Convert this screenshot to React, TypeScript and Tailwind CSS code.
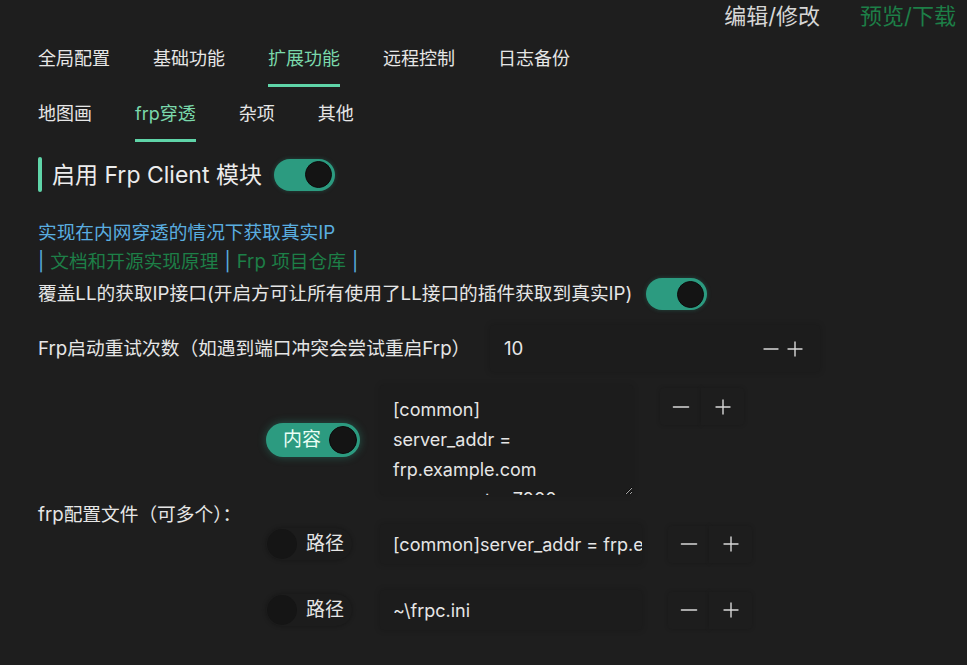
import React from "react";
import { Minus, Plus } from "lucide-react";

const MINT = "bg-[#5fd4a8]";

function Tab({ label, active }: { label: string; active?: boolean }) {
  return (
    <div className="flex flex-col items-stretch">
      <span className={`leading-[24px] text-[18px] ${active ? "text-[#7ad8ab]" : "text-[#e6e6e6]"}`}>{label}</span>
      <div className={`mt-[13px] h-[3px] ${active ? MINT : "bg-transparent"}`} />
    </div>
  );
}

function BigToggle() {
  return (
    <div className="w-[61px] h-[32px] rounded-full bg-[#2c9b80] flex items-center justify-end pr-[3px] shadow-[0_0_4px_rgba(44,155,128,0.35)] shrink-0">
      <div className="w-[27px] h-[27px] rounded-full bg-[#141414] border border-[#0b0b0b]" />
    </div>
  );
}

function StepButtons() {
  return (
    <div className="flex">
      <div className="w-[41px] h-[37px] flex items-center justify-center bg-[#1d1d1d] shadow-[0_0_4px_rgba(0,0,0,0.18)] rounded-l-[4px]">
        <Minus size={26} strokeWidth={1.3} color="#d8d8d8" />
      </div>
      <div className="w-[43px] h-[37px] flex items-center justify-center bg-[#1d1d1d] shadow-[0_0_4px_rgba(0,0,0,0.18)] rounded-r-[4px]">
        <Plus size={24} strokeWidth={1.4} color="#d8d8d8" />
      </div>
    </div>
  );
}

function OffToggle({ label }: { label: string }) {
  return (
    <div className="w-[86px] h-[32px] rounded-full bg-[#1c1c1c] shadow-[0_0_4px_rgba(0,0,0,0.3)] flex items-center pl-[1px] shrink-0">
      <div className="w-[30px] h-[30px] rounded-full bg-[#151515]" />
      <span className="ml-[9px] text-[19px] leading-[24px] text-[#e6e6e6]">{label}</span>
    </div>
  );
}

const INPUT_FONT = "font-['Inter','Noto_Sans_CJK_SC',sans-serif]";

export default function App() {
  return (
    <div className="w-[967px] h-[665px] overflow-hidden bg-[#1e1e1e] text-[#e6e6e6] font-['Inter','Noto_Sans_CJK_SC',sans-serif]">
      {/* header */}
      <div className="h-[32px] flex items-center justify-end pr-[11px] gap-[40px] text-[22px]">
        <span className="text-[#d6d6d6]">编辑/修改</span>
        <span className="text-[#1d7f47]">预览/下载</span>
      </div>

      {/* tabs row 1 */}
      <div className="pl-[38px] pt-[15px] flex gap-[43px]">
        <Tab label="全局配置" />
        <Tab label="基础功能" />
        <Tab label="扩展功能" active />
        <Tab label="远程控制" />
        <Tab label="日志备份" />
      </div>

      {/* tabs row 2 */}
      <div className="pl-[38px] pt-[15px] flex gap-[43px]">
        <Tab label="地图画" />
        <Tab label="frp穿透" active />
        <Tab label="杂项" />
        <Tab label="其他" />
      </div>

      {/* heading */}
      <div className="pl-[38px] mt-[15px] flex items-center h-[35px]">
        <div className={`w-[4px] h-[35px] rounded-[2px] ${MINT}`} />
        <span className="ml-[10px] text-[23px] leading-[30px] text-[#ececec]">启用 Frp Client 模块</span>
        <div className="ml-[12px]">
          <BigToggle />
        </div>
      </div>

      {/* description */}
      <div className="pl-[38px] mt-[26px] text-[18.7px]">
        <div className="leading-[29px] text-[#5aaee0]">实现在内网穿透的情况下获取真实IP</div>
        <div className="leading-[29px] flex items-center">
          <span className="text-[#5aaee0]">|</span>
          <span className="text-[#1d7f47] ml-[6px]">文档和开源实现原理</span>
          <span className="text-[#5aaee0] ml-[6px]">|</span>
          <span className="text-[#1d7f47] ml-[6px]">Frp 项目仓库</span>
          <span className="text-[#5aaee0] ml-[6px]">|</span>
        </div>
        <div className="mt-[2px] h-[32px] flex items-center gap-[14px]">
          <span className="leading-[24px] text-[#e6e6e6]">覆盖LL的获取IP接口(开启方可让所有使用了LL接口的插件获取到真实IP)</span>
          <BigToggle />
        </div>
      </div>

      {/* retry count */}
      <div className="pl-[38px] mt-[15px] flex items-center text-[18.7px]">
        <span className="w-[452px] leading-[24px]">Frp启动重试次数（如遇到端口冲突会尝试重启Frp）</span>
        <div className="w-[330px] h-[47px] flex items-center justify-between pl-[14px] pr-[13px] bg-[#1c1c1c] shadow-[0_0_6px_rgba(0,0,0,0.2)] rounded-[4px]">
          <span className="leading-[24px]">10</span>
          <div className="flex items-center gap-0">
            <Minus size={24} strokeWidth={1.4} color="#d8d8d8" />
            <Plus size={24} strokeWidth={1.4} color="#d8d8d8" />
          </div>
        </div>
      </div>

      {/* config files */}
      <div className="pl-[38px] mt-[13px] flex items-center text-[18.7px]">
        <span className="w-[228px] leading-[24px]">frp配置文件（可多个）：</span>
        <div className="flex flex-col pb-[15px]">
          {/* item 1 */}
          <div className="flex items-start">
            <div className="h-[110px] flex items-center">
              <div className="w-[94px] h-[34px] rounded-full bg-[#2c9b80] flex items-center justify-between pl-[17px] pr-[3px] shadow-[0_0_8px_rgba(44,155,128,0.45)]">
                <span className="text-[19px] leading-[24px] text-[#eafff5]">内容</span>
                <div className="w-[28px] h-[28px] rounded-full bg-[#141414] border border-[#0b0b0b]" />
              </div>
            </div>
            <textarea
              readOnly
              value={"[common]\nserver_addr = frp.example.com\nserver_port = 7000\n"}
              className={`ml-[20px] w-[253px] h-[110px] pt-[10px] pl-[13px] pr-[10px] text-[18px] leading-[30px] bg-[#1c1c1c] text-[#e6e6e6] outline-none overflow-hidden resize-y shadow-[0_0_6px_rgba(0,0,0,0.15)] rounded-[4px] ${INPUT_FONT}`}
            />
            <div className="ml-[27px] mt-[3px]">
              <StepButtons />
            </div>
          </div>

          {/* item 2 */}
          <div className="mt-[29px] h-[40px] flex items-center">
            <OffToggle label="路径" />
            <input
              readOnly
              value="[common]server_addr = frp.example.com"
              className={`ml-[28px] w-[262px] h-[40px] pl-[13px] text-[18px] bg-[#1c1c1c] text-[#e6e6e6] outline-none shadow-[0_0_6px_rgba(0,0,0,0.2)] rounded-[4px] ${INPUT_FONT}`}
            />
            <div className="ml-[26px]">
              <StepButtons />
            </div>
          </div>

          {/* item 3 */}
          <div className="mt-[26px] h-[40px] flex items-center">
            <OffToggle label="路径" />
            <input
              readOnly
              value="~\frpc.ini"
              className={`ml-[28px] w-[262px] h-[40px] pl-[13px] text-[18px] bg-[#1c1c1c] text-[#e6e6e6] outline-none shadow-[0_0_6px_rgba(0,0,0,0.2)] rounded-[4px] ${INPUT_FONT}`}
            />
            <div className="ml-[26px]">
              <StepButtons />
            </div>
          </div>
        </div>
      </div>
    </div>
  );
}
